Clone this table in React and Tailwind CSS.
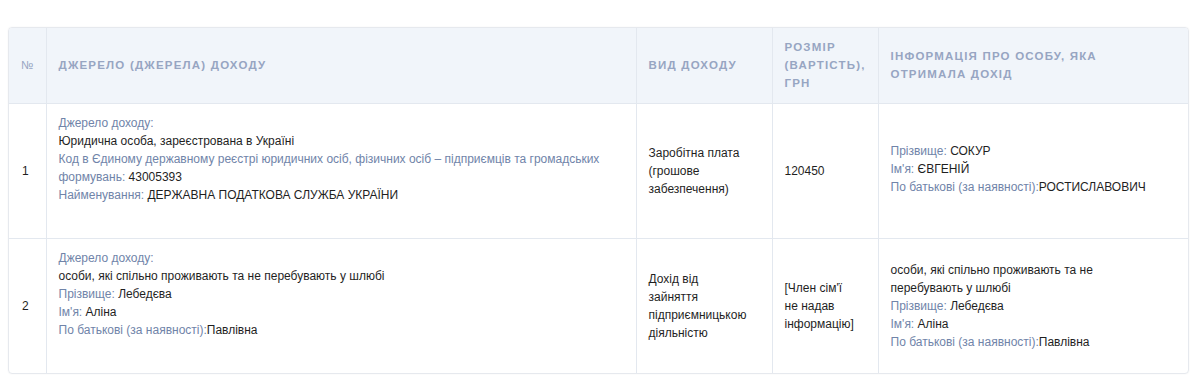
import React from "react";

const L = ({ children }) => <span className="text-[#7084a9]">{children}</span>;

export default function App() {
  const th =
    "border-l border-[#e3e8ef] px-3 py-0 text-left align-middle text-[11.5px] font-bold uppercase leading-[18px] tracking-[1.2px] text-[#97a5c2]";
  const td = "border-l border-t border-[#e3e8ef] px-3 align-middle text-[12px] leading-[18px] text-[#1f1f1f]";
  return (
    <div className="min-h-[391px] bg-white pl-[8px] pr-[11px] pt-[27px]" style={{ fontFamily: '"Liberation Sans", Arial, sans-serif' }}>
      <div className="overflow-hidden rounded-[4px] border border-[#e6e9ee] shadow-[0_0_2px_rgba(0,0,0,0.06)]">
        <table className="w-full border-collapse table-fixed">
          <colgroup>
            <col className="w-[37px]" />
            <col className="w-[590px]" />
            <col className="w-[136px]" />
            <col className="w-[106px]" />
            <col />
          </colgroup>
          <thead>
            <tr className="h-[75px] bg-[#f1f5fa]">
              <th className="px-3 py-0 text-left align-middle text-[11.5px] font-normal leading-[18px] text-[#97a5c2]">№</th>
              <th className={th}>Джерело (джерела) доходу</th>
              <th className={th}>Вид доходу</th>
              <th className={th}>
                Розмір
                <br />
                (вартість),
                <br />
                грн
              </th>
              <th className={th}>
                Інформація про особу, яка
                <br />
                отримала дохід
              </th>
            </tr>
          </thead>
          <tbody>
            <tr>
              <td className="border-t border-[#e3e8ef] pl-[13px] align-middle text-[12px] text-[#1f1f1f]">1</td>
              <td className={`${td} pt-[10px] pb-[34px] align-top`}>
                <div><L>Джерело доходу:</L></div>
                <div>Юридична особа, зареєстрована в Україні</div>
                <div>
                  <L>Код в Єдиному державному реєстрі юридичних осіб, фізичних осіб – підприємців та громадських формувань:</L> 43005393
                </div>
                <div>
                  <L>Найменування:</L> ДЕРЖАВНА ПОДАТКОВА СЛУЖБА УКРАЇНИ
                </div>
              </td>
              <td className={td}>
                Заробітна плата
                <br />
                (грошове
                <br />
                забезпечення)
              </td>
              <td className={td}>120450</td>
              <td className={`${td} pb-[4px]`}>
                <div><L>Прізвище:</L> СОКУР</div>
                <div><L>Ім'я:</L> ЄВГЕНІЙ</div>
                <div><L>По батькові (за наявності):</L>РОСТИСЛАВОВИЧ</div>
              </td>
            </tr>
            <tr>
              <td className="border-t border-[#e3e8ef] pl-[13px] align-middle text-[12px] text-[#1f1f1f]">2</td>
              <td className={`${td} pt-[10px] pb-[34px] align-top`}>
                <div><L>Джерело доходу:</L></div>
                <div>особи, які спільно проживають та не перебувають у шлюбі</div>
                <div><L>Прізвище:</L> Лебедєва</div>
                <div><L>Ім'я:</L> Аліна</div>
                <div><L>По батькові (за наявності):</L>Павлівна</div>
              </td>
              <td className={td}>
                Дохід від
                <br />
                зайняття
                <br />
                підприємницькою
                <br />
                діяльністю
              </td>
              <td className={td}>
                [Член сім'ї
                <br />
                не надав
                <br />
                інформацію]
              </td>
              <td className={td}>
                <div>
                  особи, які спільно проживають та не
                  <br />
                  перебувають у шлюбі
                </div>
                <div><L>Прізвище:</L> Лебедєва</div>
                <div><L>Ім'я:</L> Аліна</div>
                <div><L>По батькові (за наявності):</L>Павлівна</div>
              </td>
            </tr>
          </tbody>
        </table>
      </div>
    </div>
  );
}
